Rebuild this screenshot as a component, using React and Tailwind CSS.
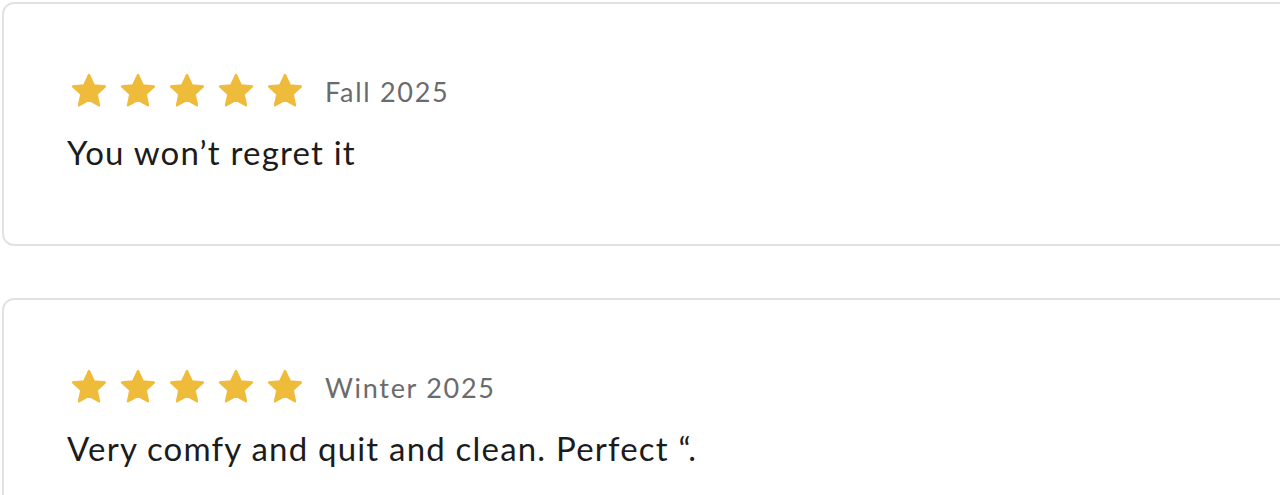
const Star = () => (
  <svg width="40" height="40" viewBox="0 0 24 24" className="shrink-0">
    <path
      d="M12 2.4l2.9 6.2 6.7.7-5 4.6 1.4 6.7L12 17.2l-6 3.4 1.4-6.7-5-4.6 6.7-.7z"
      fill="#efbb3b"
      stroke="#efbb3b"
      strokeWidth="1.4"
      strokeLinejoin="round"
    />
  </svg>
);

const reviews = [
  { term: 'Fall 2025', text: 'You won\u2019t regret it' },
  { term: 'Winter 2025', text: 'Very comfy and quit and clean. Perfect \u201c.' },
];

const App = () => {
  return (
    <div className="w-[1280px] h-[495px] overflow-hidden bg-white pt-[2px] pl-[2px] font-['Lato',sans-serif]">
      <div className="flex flex-col gap-[52px]">
        {reviews.map((r) => (
          <div
            key={r.term}
            className="w-[1290px] h-[244px] shrink-0 border-2 border-[#e2e2e2] rounded-[12px] pl-[63px] pt-[67px]"
          >
            <div className="flex items-center h-[40px]">
              <div className="flex gap-[9px] ml-[2px]">
                {[0, 1, 2, 3, 4].map((i) => (
                  <Star key={i} />
                ))}
              </div>
              <span className="ml-[20px] text-[27px] tracking-[1.7px] text-[#6b6b6b] leading-none">{r.term}</span>
            </div>
            <p className="mt-[21px] text-[33px] tracking-[1.2px] leading-[40px] text-[#1c1c1c]">{r.text}</p>
          </div>
        ))}
      </div>
    </div>
  );
};

export default App;
